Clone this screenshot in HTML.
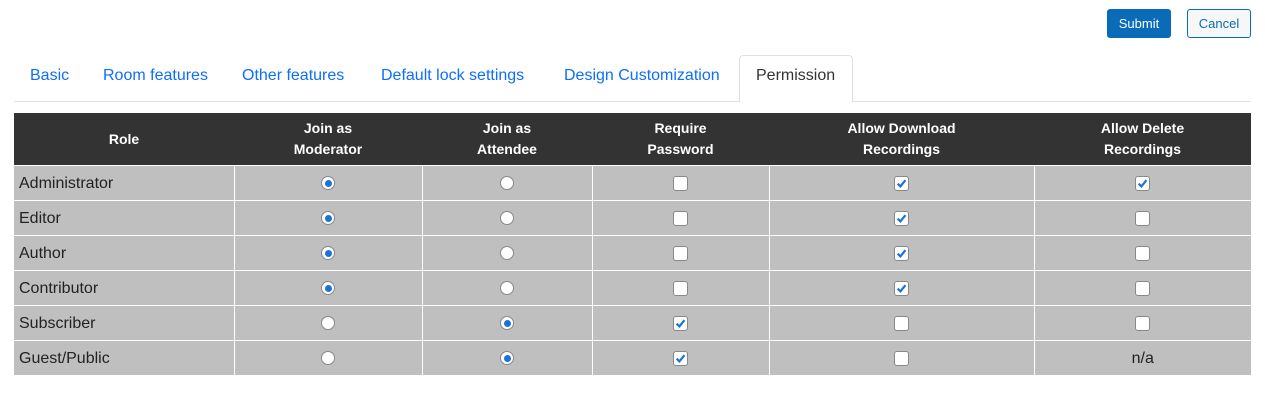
<!DOCTYPE html>
<html><head><style>
body{margin:0;width:1265px;height:400px;background:#fff;font-family:"Liberation Sans",sans-serif;position:relative;overflow:hidden}
.btn{position:absolute;top:9px;height:29px;box-sizing:border-box;border-radius:3px;font-size:13px;line-height:28px;text-align:center}
.tab{position:absolute;top:67px;font-size:16px;color:#0d6efd}
table{position:absolute;left:14px;top:113px;border-collapse:collapse;width:1237px;table-layout:fixed}
th{background:#333;color:#fff;font-size:14px;font-weight:bold;height:52px;line-height:21px;padding:1px 0 0;border:none;box-sizing:border-box}
td{background:#bfbfbf;border:1px solid #fff;height:35px;padding:2px 0 0;text-align:center;font-size:16px;color:#222;box-sizing:border-box}
tr td:first-child{border-left:none}
tr td:last-child{border-right:none}
td.r{text-align:left;padding-left:5px}
.rad{display:inline-block;width:14px;height:14px;border-radius:50%;background:#fff;border:1px solid #888;box-sizing:border-box;vertical-align:middle;position:relative}
.rad.on::after{content:"";position:absolute;left:2.5px;top:2.5px;width:7px;height:7px;border-radius:50%;background:#1a73d9}
.cb{display:inline-block;width:15px;height:15px;border-radius:3px;background:#fff;border:1px solid #888;box-sizing:border-box;vertical-align:middle;position:relative}
.cb svg{position:absolute;left:1px;top:1px}
</style></head><body>
<div class="btn" style="left:1107px;width:64px;background:#0a6bb8;color:#fff;border:1px solid #0a6bb8">Submit</div>
<div class="btn" style="left:1187px;width:64px;background:#f6f7f7;color:#0a6bb8;border:1px solid #0a6bb8">Cancel</div>
<div class="tab" style="left:30px">Basic</div>
<div class="tab" style="left:103px">Room features</div>
<div class="tab" style="left:242px">Other features</div>
<div class="tab" style="left:381px">Default lock settings</div>
<div class="tab" style="left:564px">Design Customization</div>
<div style="position:absolute;left:14px;top:101px;width:1237px;height:1px;background:#dee2e6"></div>
<div style="position:absolute;left:739px;top:55px;width:112px;height:46px;border:1px solid #dee2e6;border-bottom:1px solid #fff;border-radius:4px 4px 0 0;background:#fff;box-sizing:content-box"></div>
<div class="tab" style="left:756px;color:#333">Permission</div>
<table>
<colgroup><col style="width:220px"><col style="width:188px"><col style="width:170px"><col style="width:177px"><col style="width:265px"><col></colgroup>
<tr><th>Role</th><th>Join as<br>Moderator</th><th>Join as<br>Attendee</th><th>Require<br>Password</th><th>Allow Download<br>Recordings</th><th>Allow Delete<br>Recordings</th></tr>
<tbody id="b"></tbody>
</table>
<script>
var R=[["Administrator",1,1,0,1,1],["Editor",1,1,0,1,0],["Author",1,1,0,1,0],["Contributor",1,1,0,1,0],["Subscriber",0,0,1,0,0],["Guest/Public",0,0,1,0,2]];
var ck='<svg width="11" height="11" viewBox="0 0 10 10"><path d="M1.5 5.2L4 7.6L8.6 2" stroke="#1a73d9" stroke-width="2" fill="none"/></svg>';
var h="";R.forEach(function(r){h+='<tr><td class="r">'+r[0]+'</td><td><span class="rad'+(r[1]?' on':'')+'"></span></td><td><span class="rad'+(r[1]?'':' on')+'"></span></td>';
[r[3],r[4],r[5]].forEach(function(v){h+='<td>'+(v==2?'n/a':'<span class="cb">'+(v?ck:'')+'</span>')+'</td>'});h+='</tr>'});
document.getElementById('b').innerHTML=h;
</script>
</body></html>
